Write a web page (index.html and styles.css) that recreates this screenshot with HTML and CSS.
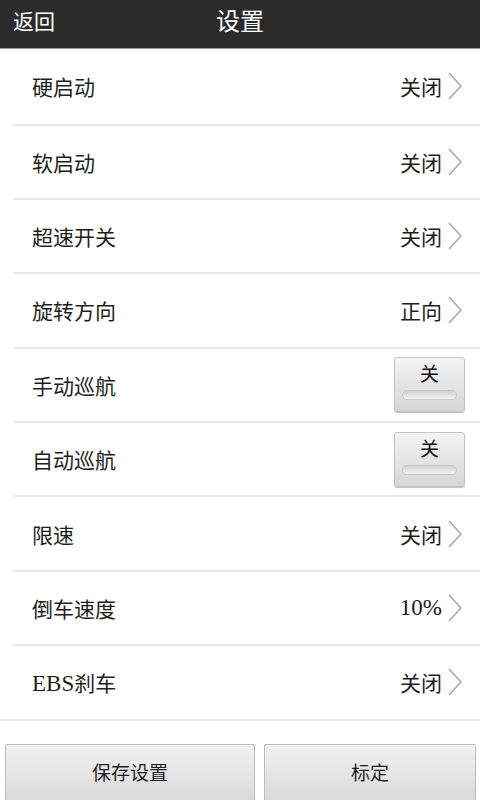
FILE: index.html
```html
<!doctype html>
<html lang="zh-CN">
<head>
    <meta charset="UTF-8">
    <title>设置</title>

    <link rel="stylesheet" href="styles.css">
</head>
<body>

<div class="title-bar">
    <span class="title-bar__back">返回</span>
    <span class="title-bar__title">设置</span>
</div>

<div class="settings-list">
    <div class="settings-item">
        <span class="settings-item__label">硬启动</span>
        <span class="settings-item__value">关闭<i class="chevron"></i></span>
    </div>
    <div class="settings-item">
        <span class="settings-item__label">软启动</span>
        <span class="settings-item__value">关闭<i class="chevron"></i></span>
    </div>
    <div class="settings-item">
        <span class="settings-item__label">超速开关</span>
        <span class="settings-item__value">关闭<i class="chevron"></i></span>
    </div>
    <div class="settings-item">
        <span class="settings-item__label">旋转方向</span>
        <span class="settings-item__value">正向<i class="chevron"></i></span>
    </div>
    <div class="settings-item">
        <span class="settings-item__label">手动巡航</span>
        <span class="toggle"><span class="toggle__text">关</span><span class="toggle__groove"></span></span>
    </div>
    <div class="settings-item">
        <span class="settings-item__label">自动巡航</span>
        <span class="toggle"><span class="toggle__text">关</span><span class="toggle__groove"></span></span>
    </div>
    <div class="settings-item">
        <span class="settings-item__label">限速</span>
        <span class="settings-item__value">关闭<i class="chevron"></i></span>
    </div>
    <div class="settings-item">
        <span class="settings-item__label">倒车速度</span>
        <span class="settings-item__value"><span class="latin">10%</span><i class="chevron"></i></span>
    </div>
    <div class="settings-item settings-item--last">
        <span class="settings-item__label"><span class="latin">EBS</span>刹车</span>
        <span class="settings-item__value">关闭<i class="chevron"></i></span>
    </div>
</div>

<div class="bottom-bar">
    <button class="bottom-bar__btn bottom-bar__btn--save">保存设置</button>
    <button class="bottom-bar__btn bottom-bar__btn--calib">标定</button>
</div>

</body>
</html>
```
FILE: styles.css
```css
* {
    margin: 0;
    padding: 0;
    box-sizing: border-box;
}

body {
    width: 480px;
    height: 800px;
    overflow: hidden;
    background: #fff;
    font-family: "Liberation Serif", "Noto Sans CJK SC", serif;
    color: #1e1e1e;
}

.latin {
    font-size: 23px;
}

.title-bar {
    position: relative;
    height: 49px;
    background: #2b2b2b;
    border-bottom: 1px solid #9a9a9a;
    color: #fff;
    display: flex;
    align-items: center;
}

.title-bar__back {
    font-size: 21px;
    margin-left: 13px;
    margin-top: -8px;
}

.title-bar__title {
    position: absolute;
    left: 0;
    right: 0;
    top: 2px;
    text-align: center;
    font-size: 24px;
}

.settings-list {
    display: flex;
    flex-direction: column;
}

.settings-item {
    height: 74.4px;
    margin-left: 13px;
    padding: 0 19px 0 19px;
    border-bottom: 2px solid #e8e8e8;
    display: flex;
    align-items: center;
    justify-content: space-between;
    font-size: 21px;
}

.settings-item:first-child {
    height: 76.5px;
}

.settings-item--last {
    margin-left: 0;
    padding-left: 32px;
}

.settings-item__value {
    display: flex;
    align-items: center;
    margin-right: -1px;
}

.chevron {
    width: 14px;
    height: 28px;
    margin-left: 6px;
    background: no-repeat center / 14px 28px url("data:image/svg+xml,%3Csvg xmlns='http://www.w3.org/2000/svg' width='14' height='28' viewBox='0 0 14 28'%3E%3Cpath d='M1 1 L13 14 L1 27' fill='none' stroke='%23a8a8a8' stroke-width='1.6'/%3E%3C/svg%3E");
}

.toggle {
    width: 71px;
    height: 55px;
    margin-right: -4px;
    border: 1px solid #c4c4c4;
    border-radius: 3px;
    background: linear-gradient(#f4f4f4, #d6d6d6);
    box-shadow: 0 1px 1px rgba(0, 0, 0, 0.25);
    display: flex;
    flex-direction: column;
    align-items: center;
}

.toggle__text {
    font-size: 19px;
    line-height: 20px;
    margin-top: 7px;
    color: #111;
}

.toggle__groove {
    width: 55px;
    height: 10px;
    margin-top: 5px;
    border-radius: 5px;
    background: linear-gradient(#d2d2d2, #f4f4f4);
    border: 1px solid #c8c8c8;
}

.bottom-bar {
    margin-top: 23px;
    padding: 0 4px 0 5px;
    display: flex;
    gap: 9px;
}

.bottom-bar__btn {
    height: 58px;
    border: 1px solid #bdbdbd;
    border-radius: 2px;
    background: linear-gradient(#f2f2f2, #d9d9d9);
    font-family: "Liberation Serif", "Noto Sans CJK SC", serif;
    font-size: 19px;
    color: #1e1e1e;
    padding-bottom: 2px;
}

.bottom-bar__btn--save {
    width: 250px;
}

.bottom-bar__btn--calib {
    width: 212px;
}
```
